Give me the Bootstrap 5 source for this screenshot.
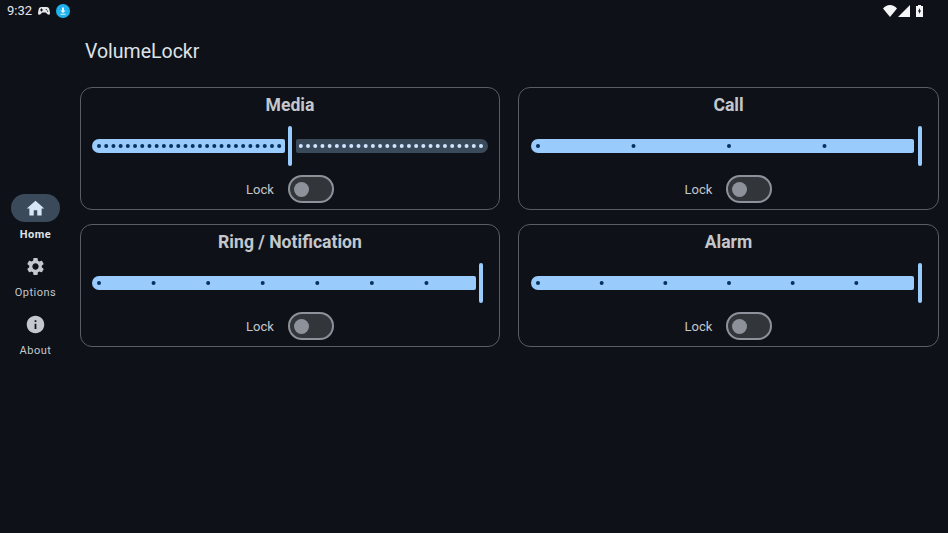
<!DOCTYPE html>
<html lang="en">
<head>
  <meta charset="UTF-8">
  <title>VolumeLockr</title>
  <link href="https://cdn.jsdelivr.net/npm/bootstrap@5.3.0/dist/css/bootstrap.min.css" rel="stylesheet">
  <style>
    body {
      background-color: #0e1218;
      font-family: Roboto, sans-serif;
      color: #c4c7cc;
      width: 948px;
      height: 533px;
      overflow: hidden;
    }
    .status-bar {
      height: 22px;
      padding: 0 25px 0 7px;
      font-size: 13px;
      color: #e6e8ec;
    }
    .status-gap {
      margin-left: 6px;
    }
    .status-near {
      margin-left: 1px;
    }
    .rail {
      width: 71px;
      padding-top: 172px;
    }
    .rail-item {
      height: 58px;
      font-size: 11px;
      letter-spacing: .5px;
      color: #c4c7cc;
    }
    .rail-pill {
      width: 49px;
      height: 28px;
      border-radius: 14px;
    }
    .rail-pill svg {
      width: 21px;
      height: 21px;
      fill: #c4c7cc;
    }
    .rail-label {
      margin-top: 5px;
      line-height: 16px;
    }
    .rail-item.active .rail-pill {
      background: #3a4a5a;
    }
    .rail-item.active svg {
      fill: #d7e6f7;
    }
    .rail-item.active .rail-label {
      font-weight: 700;
      color: #dfe2e7;
    }
    .app-title {
      font-size: 19.500px;
      line-height: 24px;
      margin: 18px 0 0 14px;
      color: #dfe2e7;
    }
    .vol-grid {
      display: grid;
      grid-template-columns: 420px 421px;
      column-gap: 18px;
      row-gap: 14px;
      margin: 23px 0 0 9px;
    }
    .vol-card {
      height: 123px;
      background: transparent;
      border: 1px solid #5a5e64;
      border-radius: 12px;
      color: #c4c7cc;
    }
    .vol-name {
      font-size: 17.600px;
      font-weight: 700;
      line-height: 22px;
      margin-top: 6px;
    }
    .slider-box {
      position: relative;
      height: 40px;
      margin: 10px 11px 0;
    }
    .vol-card:nth-child(even) .slider-box {
      margin-left: 11.600px;
      margin-right: 10.400px;
    }
    .seg {
      position: absolute;
      top: 13px;
      height: 14px;
    }
    .seg-on {
      background: #9acbfd;
      border-radius: 7px 2px 2px 7px;
    }
    .seg-off {
      background: #3a4a5a;
      border-radius: 2px 7px 7px 2px;
    }
    .thumb {
      position: absolute;
      top: 0;
      width: 4px;
      height: 40px;
      border-radius: 2px;
      background: #9acbfd;
    }
    .tick-layer {
      position: absolute;
      left: 0;
      top: 0;
      width: 100%;
      height: 40px;
    }
    .lock-row {
      margin-top: 9px;
      font-size: 13px;
      gap: 14px;
    }
    .lock-text {
      margin-top: 2px;
    }
    .fake-switch {
      width: 46px;
      height: 28px;
      border-radius: 14px;
      border: 2px solid #8d9199;
      background: #32353a;
      padding-left: 4px;
    }
    .fake-switch span {
      width: 15px;
      height: 15px;
      border-radius: 50%;
      background: #8d9199;
    }
  </style>
</head>
<body>

  <!-- barra de estado -->
  <div class="status-bar d-flex align-items-center">
    <span>9:32</span>
    <svg class="status-gap" width="12" height="10" viewBox="0 0 24 20" fill="#e6e8ec"><path d="M7 2h10c3.500 0 5.500 2.500 6 6l1 6c.4 3-2.800 4.500-5 2.500L15.500 13h-7L5 16.500C2.800 18.500-.4 17 0 14l1-6c.5-3.500 2.500-6 6-6zm-1 3v2H4v2h2v2h2V9h2V7H8V5zm10.500 1a1.200 1.200 0 100 2.400 1.200 1.200 0 000-2.400zm2.500 3a1.200 1.200 0 100 2.400 1.200 1.200 0 000-2.400z"/></svg>
    <svg class="status-gap" width="14" height="14" viewBox="0 0 14 14"><circle cx="7" cy="7" r="7" fill="#1fb2f0"/><path d="M6 3.500h2v3h1.800L7 9 4.200 6.500H6zM4.500 9.800h5v1h-5z" fill="#e6f6fd"/></svg>
    <span class="ms-auto d-flex align-items-center">
      <svg width="14" height="12" viewBox="0 0 14 12" fill="#f4f5f7"><path d="M0 3.400C1.800 1.300 4.300 0 7 0s5.200 1.300 7 3.400L7 12z"/></svg>
      <svg class="status-near" width="12" height="12" viewBox="0 0 12 12" fill="#f4f5f7"><path d="M12 0v12H0z"/></svg>
      <svg class="status-gap" width="7" height="12" viewBox="0 0 7 12"><path d="M2 0h3v1h2v11H0V1h2z" fill="#f4f5f7"/><path d="M4 3L1.800 6.500h1.300l-.2 2.500L5.200 5.500H3.800z" fill="#0e1218"/></svg>
    </span>
  </div>

  <div class="d-flex">
    <!-- menu lateral -->
    <nav class="rail flex-shrink-0">
      <div class="rail-item active d-flex flex-column align-items-center">
        <div class="rail-pill d-flex align-items-center justify-content-center">
          <svg viewBox="0 0 24 24"><path d="M10 20v-6h4v6h5v-8h3L12 3 2 12h3v8z"/></svg>
        </div>
        <div class="rail-label">Home</div>
      </div>
      <div class="rail-item d-flex flex-column align-items-center">
        <div class="rail-pill d-flex align-items-center justify-content-center">
          <svg viewBox="0 0 24 24"><path d="M19.140 12.940c.04-.3.06-.61.06-.94 0-.32-.02-.64-.07-.94l2.030-1.580c.18-.14.23-.41.12-.61l-1.920-3.320c-.12-.22-.37-.29-.59-.22l-2.390.96c-.5-.38-1.030-.7-1.620-.94l-.36-2.540c-.04-.24-.24-.41-.48-.41h-3.840c-.24 0-.43.17-.47.41l-.36 2.540c-.59.24-1.130.57-1.620.94l-2.390-.96c-.22-.08-.47 0-.59.22L2.740 8.870c-.12.21-.08.47.12.61l2.030 1.580c-.05.3-.09.63-.09.94s.02.64.07.94l-2.030 1.580c-.18.14-.23.41-.12.61l1.920 3.320c.12.22.37.29.59.22l2.390-.96c.5.38 1.030.7 1.620.94l.36 2.540c.05.24.24.41.48.41h3.840c.24 0 .44-.17.47-.41l.36-2.540c.59-.24 1.130-.56 1.620-.94l2.390.96c.22.08.47 0 .59-.22l1.920-3.320c.12-.22.07-.47-.12-.61l-2.010-1.580zM12 15.600c-1.980 0-3.600-1.620-3.600-3.600s1.620-3.600 3.600-3.600 3.600 1.620 3.600 3.600-1.620 3.600-3.600 3.600z"/></svg>
        </div>
        <div class="rail-label">Options</div>
      </div>
      <div class="rail-item d-flex flex-column align-items-center">
        <div class="rail-pill d-flex align-items-center justify-content-center">
          <svg viewBox="0 0 24 24"><path d="M12 2C6.480 2 2 6.480 2 12s4.480 10 10 10 10-4.480 10-10S17.520 2 12 2zm1 15h-2v-6h2v6zm0-8h-2V7h2v2z"/></svg>
        </div>
        <div class="rail-label">About</div>
      </div>
    </nav>

    <main class="flex-grow-1">
      <div class="app-title">VolumeLockr</div>
      <div class="vol-grid" id="grid"></div>
    </main>
  </div>

  <script src="https://cdn.jsdelivr.net/npm/bootstrap@5.3.0/dist/js/bootstrap.bundle.min.js"></script>
  <script>
    // name, pasos del slider, valor actual
    const volumes = [
      { name: 'Media', steps: 53, value: 26.5 },
      { name: 'Call', steps: 4, value: 4 },
      { name: 'Ring / Notification', steps: 7, value: 7 },
      { name: 'Alarm', steps: 6, value: 6 }
    ];

    const START = 7, RANGE = 382, WIDTH = 396;

    document.getElementById('grid').innerHTML = volumes.map(v => {
      const pos = START + RANGE * v.value / v.steps;
      let ticks = '';
      for (let i = 0; i <= v.steps; i++) {
        const x = START + RANGE * i / v.steps;
        if (Math.abs(x - pos) < 6) continue;
        ticks += `<circle cx="${x.toFixed(2)}" cy="20" r="2" fill="${x > pos ? '#cfe5ff' : '#07305c'}"/>`;
      }
      const off = pos < WIDTH - 14
        ? `<div class="seg seg-off" style="left:${pos + 6}px;width:${WIDTH - pos - 6}px"></div>` : '';
      return `
        <div class="card vol-card">
          <div class="vol-name text-center">${v.name}</div>
          <div class="slider-box">
            <div class="seg seg-on" style="left:0;width:${pos - 5.5}px"></div>
            ${off}
            <svg class="tick-layer">${ticks}</svg>
            <div class="thumb" style="left:${pos - 2}px"></div>
          </div>
          <div class="lock-row d-flex align-items-center justify-content-center">
            <span class="lock-text">Lock</span>
            <div class="fake-switch d-flex align-items-center"><span></span></div>
          </div>
        </div>`;
    }).join('');
  </script>
</body>
</html>
